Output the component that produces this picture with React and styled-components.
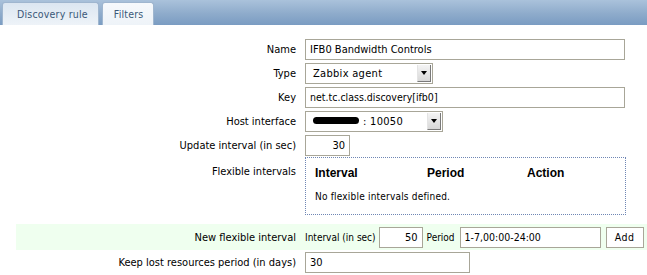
import React from 'react';
import styled, {createGlobalStyle} from 'styled-components';

const GlobalStyle = createGlobalStyle`
  body {
    margin: 0;
    background: #ffffff;
    font-family: "DejaVu Sans Condensed", "DejaVu Sans", sans-serif;
    font-size: 11px;
    color: #000000;
  }
`;

const TabBar = styled.div`
  display: flex;
  align-items: flex-end;
  gap: 3px;
  height: 25px;
  padding-left: 2px;
  background: linear-gradient(to bottom, #aac2db 0%, #8eabcb 55%, #7a9cc2 100%);
`;

const Tab = styled.div`
  height: 23px;
  box-sizing: border-box;
  padding: ${p => p.$active ? '0 10px 0 14px' : '0 10px 0 11px'};
  display: flex;
  align-items: center;
  border: 1px solid #9fb6cf;
  border-bottom: none;
  border-radius: 3px 3px 0 0;
  font-family: "DejaVu Sans Condensed", "DejaVu Sans", sans-serif;
  font-size: 10.5px;
  letter-spacing: 0.2px;
  color: #3a5878;
  background: ${p => p.$active
    ? 'linear-gradient(to bottom, #dbe6f1, #eef3f8)'
    : 'linear-gradient(to bottom, #f6f9fc, #eef3f8)'};
`;

const Form = styled.div`
  display: flex;
  flex-direction: column;
  padding-top: 12px;
`;

const Row = styled.div`
  display: flex;
  align-items: ${p => p.$top ? 'flex-start' : 'center'};
  gap: 9px;
  min-height: ${p => p.$green ? 26 : 24}px;
  margin-top: ${p => p.$mt || 0}px;
  margin-left: ${p => p.$green ? 16 : 0}px;
  background: ${p => p.$green ? '#efffef' : 'transparent'};
`;

const Label = styled.div`
  width: ${p => p.$w || 296}px;
  flex-shrink: 0;
  text-align: right;
  white-space: nowrap;
  padding-top: ${p => p.$pt || 0}px;
`;

const TextInput = styled.input`
  box-sizing: border-box;
  width: ${p => p.$w}px;
  height: 21px;
  border: 1px solid #a8a698;
  background: #ffffff;
  padding: 0 4px;
  font-family: "DejaVu Sans Condensed", "DejaVu Sans", sans-serif;
  font-size: ${p => p.$fs || 11}px;
  color: #000;
  text-align: ${p => p.$right ? 'right' : 'left'};
  outline: none;
`;

const Select = styled.div`
  box-sizing: border-box;
  width: ${p => p.$w}px;
  height: 21px;
  border: 1px solid #a8a698;
  display: flex;
  align-items: center;
  justify-content: space-between;
  padding-left: 7px;
  font-family: "DejaVu Sans Condensed", "DejaVu Sans", sans-serif;
  font-size: 11px;
  letter-spacing: 0.3px;
`;

const SelectArrow = styled.div`
  width: 14px;
  height: 17px;
  margin-right: 1px;
  display: flex;
  align-items: center;
  justify-content: center;
  background: linear-gradient(to bottom, #f4f4f4, #d8d8d8);
  border-left: 1px solid #e4e4e4;
  border-right: 1px solid #7a7a7a;
  border-bottom: 1px solid #7a7a7a;
  box-sizing: border-box;
`;

const Arrow = styled.span`
  width: 0;
  height: 0;
  border-left: 3.5px solid transparent;
  border-right: 3.5px solid transparent;
  border-top: 4px solid #000;
`;

const Redacted = styled.span`
  display: inline-block;
  width: 46px;
  height: 7px;
  border-radius: 4px;
  background: #000;
  margin-right: 4px;
  vertical-align: 1px;
`;

const FlexBox = styled.div`
  box-sizing: border-box;
  width: 321px;
  height: 58px;
  border: 1px dotted #6f86b4;
  padding: 8px 9px 0;
`;

const FlexHead = styled.div`
  display: grid;
  grid-template-columns: 112px 100px 1fr;
  font-family: "Liberation Sans", Arial, sans-serif;
  font-weight: bold;
  font-size: 12px;
  height: 14px;
`;

const FlexEmpty = styled.div`
  font-family: "DejaVu Sans Condensed", "DejaVu Sans", sans-serif;
  font-size: 10px;
  letter-spacing: 0.2px;
  margin-top: 11px;
`;

const Inline = styled.div`
  display: flex;
  align-items: center;
  white-space: nowrap;
`;

const InlineText = styled.span`
  margin: 0 ${p => p.$mr || 4}px 0 ${p => p.$ml || 0}px;
  font-size: 10px;
`;

const Button = styled.div`
  box-sizing: border-box;
  width: 38px;
  height: 21px;
  margin-left: 5px;
  border: 1px solid #a8a698;
  background: #ffffff;
  display: flex;
  align-items: center;
  justify-content: center;
  font-size: 10.5px;
  letter-spacing: 0.4px;
`;

const App = () => {
  return (
    <>
      <GlobalStyle />
      <TabBar>
        <Tab $active>Discovery rule</Tab>
        <Tab>Filters</Tab>
      </TabBar>
      <Form>
        <Row>
          <Label>Name</Label>
          <TextInput $w={320} defaultValue="IFB0 Bandwidth Controls" />
        </Row>
        <Row>
          <Label>Type</Label>
          <Select $w={128}>
            Zabbix agent
            <SelectArrow><Arrow /></SelectArrow>
          </Select>
        </Row>
        <Row>
          <Label>Key</Label>
          <TextInput $w={320} $fs={10.5} defaultValue="net.tc.class.discovery[ifb0]" />
        </Row>
        <Row>
          <Label>Host interface</Label>
          <Select $w={138}>
            <span><Redacted />: 10050</span>
            <SelectArrow><Arrow /></SelectArrow>
          </Select>
        </Row>
        <Row>
          <Label>Update interval (in sec)</Label>
          <TextInput $w={45} $right defaultValue="30" />
        </Row>
        <Row $top>
          <Label $pt={8}>Flexible intervals</Label>
          <FlexBox>
            <FlexHead>
              <span>Interval</span>
              <span>Period</span>
              <span>Action</span>
            </FlexHead>
            <FlexEmpty>No flexible intervals defined.</FlexEmpty>
          </FlexBox>
        </Row>
        <Row $green $mt={9}>
          <Label $w={280}>New flexible interval</Label>
          <Inline>
            <InlineText $mr={3}>Interval (in sec)</InlineText>
            <TextInput $w={44} $right defaultValue="50" />
            <InlineText $ml={4} $mr={5}>Period</InlineText>
            <TextInput $w={141} $fs={10.5} defaultValue="1-7,00:00-24:00" />
            <Button>Add</Button>
          </Inline>
        </Row>
        <Row>
          <Label>Keep lost resources period (in days)</Label>
          <TextInput $w={165} defaultValue="30" />
        </Row>
      </Form>
    </>
  );
};

export default App;
